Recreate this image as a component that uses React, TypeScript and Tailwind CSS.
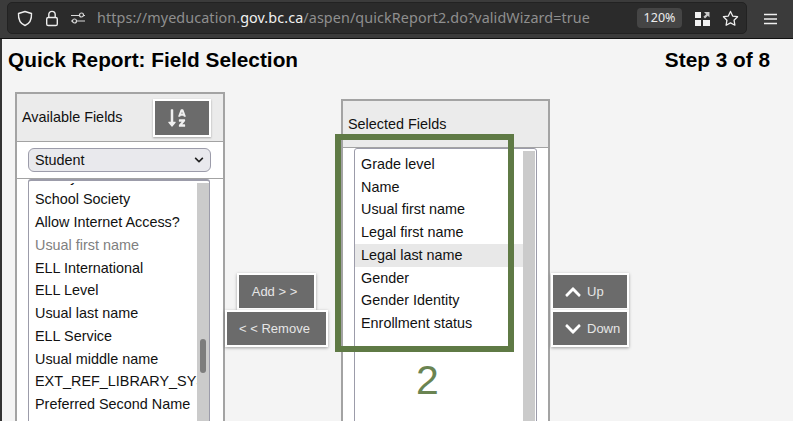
import React from "react";
import { FaChevronDown, FaChevronUp, FaSortAlphaDown } from "react-icons/fa";

const sans = "font-['Liberation_Sans',Arial,sans-serif]";
const available: [string, boolean?][] = [
  ["Family"], ["School Society"], ["Allow Internet Access?"], ["Usual first name", true], ["ELL International"], ["ELL Level"],
  ["Usual last name"], ["ELL Service"], ["Usual middle name"], ["EXT_REF_LIBRARY_SYSTEM"], ["Preferred Second Name"],
];
const selected = ["Grade level", "Name", "Usual first name", "Legal first name", "Legal last name", "Gender", "Gender Identity", "Enrollment status"];

function Btn({ children, className }: { children: React.ReactNode; className: string }) {
  return (
    <button className={`flex h-[37px] items-center bg-[#6b6b6b] border-2 border-white shadow-[0_1px_3px_rgba(0,0,0,0.35)] text-[13px] text-[#e6e6e6] ${className}`}>
      {children}
    </button>
  );
}

function Toolbar() {
  return (
    <div className="flex h-[39px] bg-[#3b3b3b] border-b border-[#111] pt-[2px] pl-[7px] pr-[16px] font-['Noto_Sans',sans-serif]">
      <div className="flex h-[32px] w-[740px] items-center rounded-[5px] border border-[#222] bg-[#2b2b2b] pl-[9px] pr-[7px]">
        <svg width="16" height="17" viewBox="0 0 16 17" fill="none" stroke="#ededed" strokeWidth="1.4" className="shrink-0">
          <path d="M8 1.5 L14.5 3.5 C14.8 9 13 13.5 8 15.5 C3 13.5 1.2 9 1.5 3.5 Z" strokeLinejoin="round" />
        </svg>
        <svg width="14" height="17" viewBox="0 0 14 17" fill="none" stroke="#ededed" strokeWidth="1.4" className="ml-[12px] shrink-0">
          <rect x="1.7" y="7.5" width="10.6" height="8" rx="1.6" />
          <path d="M3.8 7.5 V4.6 a3.2 3.2 0 0 1 6.4 0 V7.5" />
        </svg>
        <svg width="16" height="12" viewBox="0 0 16 12" fill="none" stroke="#d8d8d8" strokeWidth="1.2" className="ml-[11px] shrink-0">
          <path d="M1 3.5 H9.5 M13.5 3.5 H15 M7 9 H15 M1 9 H2" />
          <circle cx="11.5" cy="3" r="2" />
          <circle cx="4.5" cy="9" r="2" />
        </svg>
        <div className="ml-[11px] text-[14.35px] tracking-[0.1px] text-[#8f8f8f] whitespace-nowrap">
          https://myeducation.<span className="text-[#f0f0f0]">gov.bc.ca</span>/aspen/quickReport2.do?validWizard=true
        </div>
        <div className="ml-auto flex h-[20px] w-[45px] items-center justify-center rounded-[4px] bg-[#454545] text-[12.5px] text-[#ececec]">120%</div>
        <svg width="15" height="15" viewBox="0 0 15 15" fill="#f2f2f2" className="ml-[13px] shrink-0">
          <rect x="0" y="1" width="6" height="6" />
          <rect x="0" y="9" width="6" height="6" />
          <rect x="8" y="9" width="7" height="6" />
          <path d="M9 1 H14.5 V6.5 L12.8 4.8 L10 7.4 L8.4 5.8 L11.2 3.2 Z" opacity="0.8" />
        </svg>
        <svg width="17" height="17" viewBox="0 0 24 24" fill="none" stroke="#efefef" strokeWidth="1.8" strokeLinejoin="round" className="ml-[12px] shrink-0">
          <path d="M12 2 L15.1 8.5 L22 9.5 L17 14.4 L18.2 21.5 L12 18.1 L5.8 21.5 L7 14.4 L2 9.5 L8.9 8.5 Z" />
        </svg>
      </div>
      <svg width="13" height="12" viewBox="0 0 13 12" stroke="#f0f0f0" strokeWidth="1.3" className="ml-[17px] mt-[11px] shrink-0">
        <path d="M0 1.5 H13 M0 6 H13 M0 10.5 H13" />
      </svg>
    </div>
  );
}

function ListRow({ children, className = "" }: { children: React.ReactNode; className?: string }) {
  return <div className={`h-[22.75px] pl-[6px] leading-[22.75px] whitespace-nowrap overflow-hidden ${className}`}>{children}</div>;
}

export default function App() {
  return (
    <div className={`${sans} relative h-[421px] w-[793px] overflow-hidden bg-[#333]`}>
      <Toolbar />
      <div className="ml-[2px] h-[382px] overflow-hidden bg-[#f4f4f4] text-black">
        <div className="flex h-[40px] items-center justify-between pl-[6px] pr-[23px] pt-[1px] text-[20.8px] font-bold">
          <span>Quick Report: Field Selection</span>
          <span>Step 3 of 8</span>
        </div>
        <div className="flex items-start pl-[13px] text-[14.4px] text-[#111]">
          <section className="mt-[13px] h-[400px] w-[210px] shrink-0 border-2 border-[#a3a3a3]">
            <div className="flex h-[48px] items-center justify-between border-b border-[#a3a3a3] bg-[#ebebeb] pl-[5px] pr-[12px]">
              <span className="pt-[1px]">Available Fields</span>
              <div className="flex h-[38px] w-[58px] items-center justify-start border-2 border-white bg-[#6b6b6b] pl-[12px] text-[#f0f0f0] shadow-[0_1px_2px_rgba(0,0,0,0.3)]">
                <FaSortAlphaDown size={20} />
              </div>
            </div>
            <div className="bg-white">
              <div className="h-[37px] border-b border-[#a3a3a3] pl-[11px] pt-[6px]">
                <div className="flex h-[24px] w-[183px] items-center justify-between rounded-[6px] border border-[#9c9caa] bg-[#e9e9ed] pl-[6px] pr-[6px]">
                  <span className="pt-[1px]">Student</span>
                  <FaChevronDown size={10} className="text-[#222]" />
                </div>
              </div>
              <div className="relative ml-[11px] h-[260px] w-[182px] overflow-hidden rounded-t-[3px] border border-b-0 border-t-2 border-[#9c9caa]">
                <div className="mt-[2px] h-full overflow-hidden">
                  <div className="-mt-[17.5px] w-[168px]">
                    {available.map(([t, gray]) => (
                      <ListRow key={t} className={gray ? "text-[#808080]" : ""}>{t}</ListRow>
                    ))}
                  </div>
                </div>
                <div className="absolute right-0 top-[2px] bottom-0 w-[12px] bg-[#cbcbcb]">
                  <div className="absolute left-[3px] top-[156px] h-[34px] w-[6px] rounded-[3px] bg-[#7d7d7d]" />
                </div>
              </div>
            </div>
          </section>

          <div className="mt-[194px] flex w-[103px] shrink-0 flex-col items-center">
            <Btn className="w-[79px] justify-center pr-[4px]">Add &gt; &gt;</Btn>
            <Btn className="w-[103px] justify-center pr-[4px]">&lt; &lt; Remove</Btn>
          </div>

          <section className="ml-[13px] mt-[20px] h-[400px] w-[209px] shrink-0 border-2 border-[#a3a3a3]">
            <div className="flex h-[47px] items-end border-b border-[#a3a3a3] bg-[#ebebeb] pb-[11px] pl-[5px]">
              <span>Selected Fields</span>
            </div>
            <div className="h-[300px] bg-white pl-[11px]">
              <div className="relative h-full w-[183px] rounded-t-[3px] border border-[#9c9caa]">
                <div className="w-[168px] pt-[3.85px]">
                  {selected.map((t) => (
                    <ListRow key={t} className={t === "Legal last name" ? "bg-[#e8e8e8]" : ""}>{t}</ListRow>
                  ))}
                </div>
                <div className="absolute right-[1px] top-[2px] bottom-0 w-[12px] bg-[#cbcbcb]" />
              </div>
            </div>
          </section>

          <div className="ml-[1px] mt-[194px] flex w-[78px] shrink-0 flex-col">
            <Btn className="w-[78px] pl-[11px]"><FaChevronUp size={18} className="mr-[5px] text-white" />Up</Btn>
            <Btn className="w-[78px] pl-[11px]"><FaChevronDown size={18} className="mr-[5px] text-white" />Down</Btn>
          </div>
        </div>
      </div>

      <div className="pointer-events-none absolute left-[335px] top-[134px] h-[218px] w-[179px] border-[6px] border-[#5f7a45]" />
      <div className="pointer-events-none absolute left-[416px] top-[356px] text-[41px] leading-[48px] text-[#6a8452]">2</div>
    </div>
  );
}
